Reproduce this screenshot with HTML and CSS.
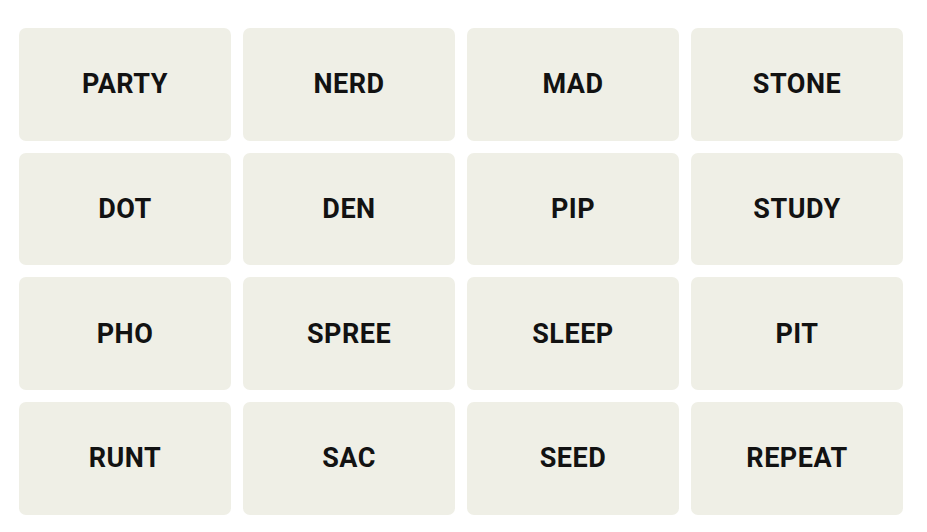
FILE: index.html
```html
<!DOCTYPE html>
<html lang="en">
<head>
<meta charset="utf-8">
<title>Connections</title>
<link rel="stylesheet" href="styles.css">
</head>
<body>
  <main class="board">
    <button class="tile">PARTY</button>
    <button class="tile">NERD</button>
    <button class="tile">MAD</button>
    <button class="tile">STONE</button>
    <button class="tile">DOT</button>
    <button class="tile">DEN</button>
    <button class="tile">PIP</button>
    <button class="tile">STUDY</button>
    <button class="tile">PHO</button>
    <button class="tile">SPREE</button>
    <button class="tile">SLEEP</button>
    <button class="tile">PIT</button>
    <button class="tile">RUNT</button>
    <button class="tile">SAC</button>
    <button class="tile">SEED</button>
    <button class="tile">REPEAT</button>
  </main>
</body>
</html>
```
FILE: styles.css
```css
html, body {
  margin: 0;
  padding: 0;
  background: #ffffff;
}

.board {
  display: grid;
  grid-template-columns: repeat(4, 212px);
  grid-template-rows: repeat(4, 112.67px);
  column-gap: 12px;
  row-gap: 12px;
  padding: 28px 0 0 19px;
}

.tile {
  display: flex;
  align-items: center;
  justify-content: center;
  border: none;
  border-radius: 7px;
  background: #efefe6;
  color: #121212;
  font-family: Roboto, "Liberation Sans", sans-serif;
  font-weight: 700;
  font-size: 27px;
  letter-spacing: 0.5px;
  padding: 0;
  margin: 0;
  cursor: pointer;
}
```
